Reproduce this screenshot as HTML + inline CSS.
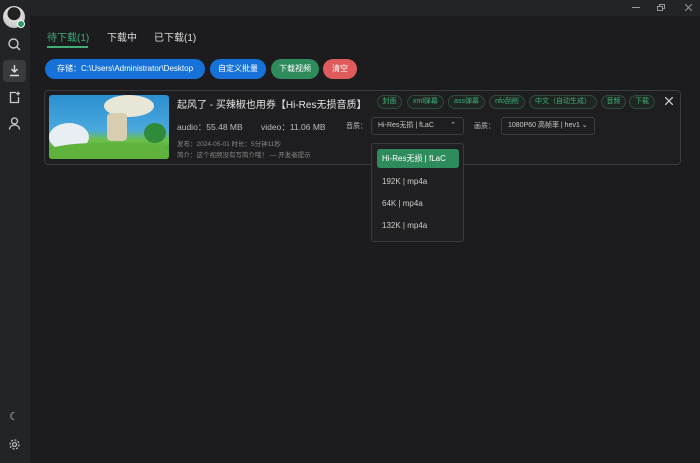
<!DOCTYPE html>
<html><head><meta charset="utf-8"><style>
*{margin:0;padding:0;box-sizing:border-box}
body{width:700px;height:463px;overflow:hidden;background:#1c1c1e;font-family:"Liberation Sans","Noto Sans CJK SC",sans-serif;position:relative;color:#ddd}
.a{position:absolute;white-space:nowrap}
.side{left:0;top:0;width:30px;height:463px;background:#232427}
.top{left:30px;top:0;width:670px;height:16px;background:#232427}
.btn{height:20px;border-radius:10px;color:#fff;font-size:8px;line-height:20px;text-align:center;top:59px}
.tag{top:95px;height:14px;border:1px solid #2f4a3b;border-radius:7px;color:#3fae78;font-size:7px;line-height:12px;text-align:center;background:#1f2622}
.sel{border:1px solid #3c3d40;border-radius:3px;height:18px;font-size:7px;line-height:16px;color:#ccc;padding-left:6px;top:117px}
.it{left:382px;font-size:8px;color:#ccc}
</style></head><body>
<div class="a side"></div>
<div class="a top"></div>
<div class="a" style="left:632px;top:7px;width:8px;height:1px;background:#999"></div>
<div class="a" style="left:659px;top:4px;width:6px;height:5px;border:1px solid #999"></div>
<div class="a" style="left:657px;top:6px;width:6px;height:5px;border:1px solid #999;background:#232427"></div>
<svg class="a" style="left:685px;top:4px" width="7" height="7" viewBox="0 0 7 7" stroke="#999" stroke-width="1"><path d="M0 0l7 7M7 0L0 7"/></svg>
<div class="a" style="left:3px;top:6px;width:22px;height:22px;border-radius:50%;background:radial-gradient(circle at 50% 35%,#222 35%,#ddd 37%,#bbb)"></div>
<div class="a" style="left:17px;top:20px;width:8px;height:8px;border-radius:50%;background:#2e9a5e;border:1px solid #fff"></div>
<svg class="a" style="left:7px;top:37px" width="15" height="15" viewBox="0 0 15 15" fill="none" stroke="#ccc" stroke-width="1.4"><circle cx="6.5" cy="6.5" r="4.5"/><path d="M10 10l3 3"/></svg>
<div class="a" style="left:3px;top:60px;width:23px;height:22px;background:#3a3b3f;border-radius:4px"></div>
<svg class="a" style="left:7px;top:63px" width="15" height="15" viewBox="0 0 15 15" fill="none" stroke="#ddd" stroke-width="1.4"><path d="M7.5 2v7M4.5 6l3 3 3-3M3 12.5h9"/></svg>
<svg class="a" style="left:7px;top:90px" width="15" height="15" viewBox="0 0 15 15" fill="none" stroke="#ccc" stroke-width="1.3"><path d="M9 2.5H3.5v10h8V7M11 1.5v4M9 3.5h4"/></svg>
<svg class="a" style="left:7px;top:116px" width="15" height="15" viewBox="0 0 15 15" fill="none" stroke="#ccc" stroke-width="1.3"><circle cx="7.5" cy="5" r="3"/><path d="M2.5 13.5c0-3 2.5-4.5 5-4.5s5 1.5 5 4.5"/></svg>
<div class="a" style="left:9px;top:410px;font-size:11px;color:#bbb">☾</div>
<svg class="a" style="left:8px;top:438px" width="13" height="13" viewBox="0 0 13 13" fill="none" stroke="#bbb" stroke-width="1.3"><circle cx="6.5" cy="6.5" r="2"/><circle cx="6.5" cy="6.5" r="4.5" stroke-dasharray="2 1.5"/></svg>
<div class="a" style="left:47px;top:29px;font-size:10px;color:#3fae78">待下载(1)</div>
<div class="a" style="left:47px;top:46px;width:41px;height:1.5px;background:#3fae78"></div>
<div class="a" style="left:107px;top:29px;font-size:10px;color:#ddd">下载中</div>
<div class="a" style="left:154px;top:29px;font-size:10px;color:#ddd">已下载(1)</div>
<div class="a btn" style="left:45px;width:160px;background:#1672d9">存储：C:\Users\Administrator\Desktop</div>
<div class="a btn" style="left:210px;width:56px;background:#1672d9">自定义批量</div>
<div class="a btn" style="left:271px;width:48px;background:#2e8b5c">下载视频</div>
<div class="a btn" style="left:323px;width:34px;background:#e05c5c">清空</div>
<div class="a" style="left:44px;top:90px;width:637px;height:75px;border:1px solid #3a3b3e;border-radius:4px;background:#1e1e20"></div>
<div class="a" style="left:49px;top:95px;width:120px;height:64px;border-radius:3px;overflow:hidden;background:linear-gradient(#2b8fcf,#4aa8dd 55%,#6cc24a 70%,#3f8f2e)">
<div style="position:absolute;left:0;top:28px;width:40px;height:28px;border-radius:50%;background:#e8eef2"></div>
<div style="position:absolute;left:55px;top:0;width:50px;height:22px;border-radius:50%;background:#e8e6d6"></div>
<div style="position:absolute;left:58px;top:18px;width:20px;height:28px;background:#d8cdb0;border-radius:4px"></div>
<div style="position:absolute;left:95px;top:28px;width:22px;height:20px;border-radius:50%;background:#2f8a3a"></div>
<div style="position:absolute;left:0;top:48px;width:120px;height:20px;background:#5fb33d;border-radius:40% 40% 0 0"></div>
</div>
<div class="a" style="left:177px;top:96px;font-size:10px;color:#e6e6e6">起风了 - 买辣椒也用券【Hi-Res无损音质】</div>
<div class="a" style="left:177px;top:121px;font-size:8.5px;color:#bbb">audio：55.48 MB</div>
<div class="a" style="left:261px;top:121px;font-size:8.5px;color:#bbb">video：11.06 MB</div>
<div class="a" style="left:346px;top:121px;font-size:7px;color:#bbb">音质：</div>
<div class="a" style="left:177px;top:138px;font-size:6.5px;color:#888">发布：2024-05-01 时长：5分钟11秒</div>
<div class="a" style="left:177px;top:149px;font-size:6.5px;color:#888">简介：这个视频没有写简介哦！ — 开发者提示</div>
<div class="a tag" style="left:377px;width:25px">封面</div>
<div class="a tag" style="left:407px;width:37px">xml弹幕</div>
<div class="a tag" style="left:448px;width:37px">ass弹幕</div>
<div class="a tag" style="left:489px;width:36px">nfo刮削</div>
<div class="a tag" style="left:529px;width:68px">中文（自动生成）</div>
<div class="a tag" style="left:601px;width:25px">音频</div>
<div class="a tag" style="left:629px;width:26px">下载</div>
<svg class="a" style="left:665px;top:97px" width="8" height="8" viewBox="0 0 8 8" stroke="#ccc" stroke-width="1.3"><path d="M0 0l8 8M8 0L0 8"/></svg>
<div class="a sel" style="left:371px;width:93px">Hi-Res无损 | fLaC<span style="position:absolute;right:7px;top:0">⌃</span></div>
<div class="a" style="left:474px;top:121px;font-size:7px;color:#bbb">画质：</div>
<div class="a sel" style="left:501px;width:94px">1080P60 高帧率 | hev1 ⌄</div>
<div class="a" style="left:371px;top:143px;width:93px;height:99px;background:#202022;border:1px solid #3a3b3e;border-radius:3px"></div>
<div class="a" style="left:377px;top:149px;width:82px;height:19px;background:#2e8b5c;border-radius:3px;color:#fff;font-size:8px;line-height:19px;padding-left:5px">Hi-Res无损 | fLaC</div>
<div class="a it" style="top:177px">192K | mp4a</div>
<div class="a it" style="top:199px">64K | mp4a</div>
<div class="a it" style="top:221px">132K | mp4a</div>
</body></html>
